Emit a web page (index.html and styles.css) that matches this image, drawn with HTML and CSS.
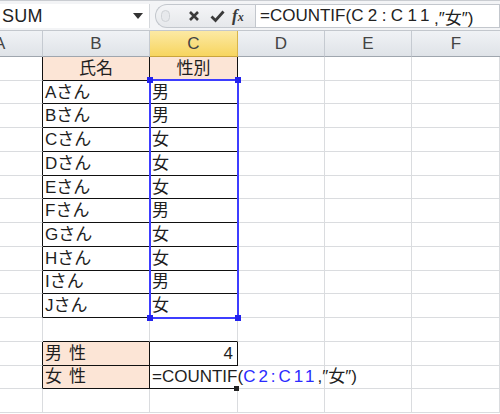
FILE: index.html
```html
<!DOCTYPE html>
<html lang="ja">
<head>
<meta charset="utf-8">
<link rel="stylesheet" href="styles.css">
</head>
<body>
<div class="bar">
  <div class="namebox"><span class="nm">SUM</span><span class="caret"></span></div>
  <div class="pill">
    <span class="dot"></span>
    <svg class="ic-x" width="12" height="12" viewBox="0 0 12 12"><path d="M2 2 L10 10 M10 2 L2 10" stroke="#3a3a3a" stroke-width="2.6" fill="none"/></svg>
    <svg class="ic-v" width="15" height="13" viewBox="0 0 15 13"><path d="M1.5 6.5 L5.5 10.5 L13.5 1.5" stroke="#3a3a3a" stroke-width="2.8" fill="none"/></svg>
    <span class="fx">f<span class="sx">x</span></span>
  </div>
  <div class="formula">=COUNTIF(<span class="wide">C2:C11</span>,″女″)</div>
</div>
<div class="sheet">
  <div class="grid">
  <div class="hd hd-a"><span>A</span></div><div class="hd">B</div><div class="hd hd-on">C</div><div class="hd">D</div><div class="hd">E</div><div class="hd hd-last">F</div>

  <div class="c lb"></div><div class="c bx pk ctr">氏名</div><div class="c bx pk ctr">性別</div><div class="c"></div><div class="c"></div><div class="c"></div>
  <div class="c lb"></div><div class="c bx">Aさん</div><div class="c bx">男</div><div class="c"></div><div class="c"></div><div class="c"></div>
  <div class="c lb"></div><div class="c bx">Bさん</div><div class="c bx">男</div><div class="c"></div><div class="c"></div><div class="c"></div>
  <div class="c lb"></div><div class="c bx">Cさん</div><div class="c bx">女</div><div class="c"></div><div class="c"></div><div class="c"></div>
  <div class="c lb"></div><div class="c bx">Dさん</div><div class="c bx">女</div><div class="c"></div><div class="c"></div><div class="c"></div>
  <div class="c lb"></div><div class="c bx">Eさん</div><div class="c bx">女</div><div class="c"></div><div class="c"></div><div class="c"></div>
  <div class="c lb"></div><div class="c bx">Fさん</div><div class="c bx">男</div><div class="c"></div><div class="c"></div><div class="c"></div>
  <div class="c lb"></div><div class="c bx">Gさん</div><div class="c bx">女</div><div class="c"></div><div class="c"></div><div class="c"></div>
  <div class="c lb"></div><div class="c bx">Hさん</div><div class="c bx">女</div><div class="c"></div><div class="c"></div><div class="c"></div>
  <div class="c lb"></div><div class="c bx">Iさん</div><div class="c bx">男</div><div class="c"></div><div class="c"></div><div class="c"></div>
  <div class="c lb"></div><div class="c bx">Jさん</div><div class="c bx">女</div><div class="c"></div><div class="c"></div><div class="c"></div>
  <div class="c"></div><div class="c bb"></div><div class="c bb"></div><div class="c"></div><div class="c"></div><div class="c"></div>
  <div class="c lb"></div><div class="c bx pk sp">男性</div><div class="c bx rt">4</div><div class="c"></div><div class="c"></div><div class="c"></div>
  <div class="c lb"></div><div class="c bx pk sp">女性</div><div class="c bx edit">=COUNTIF(<span class="ref">C2:C11</span>,″女″)<span class="handle"></span></div><div class="c"></div><div class="c"></div><div class="c"></div>
  <div class="c"></div><div class="c"></div><div class="c"></div><div class="c"></div><div class="c"></div><div class="c"></div>
  </div>
  <div class="overlay">
    <div class="sel"><i class="k k1"></i><i class="k k2"></i><i class="k k3"></i><i class="k k4"></i></div>
  </div>
</div>
</body>
</html>
```
FILE: styles.css
```css
* { box-sizing: border-box; }
html, body { margin: 0; padding: 0; background: #fff; }
body {
  width: 500px;
  height: 414px;
  overflow: hidden;
  font-family: "Liberation Sans", "Noto Sans CJK JP", sans-serif;
  color: #1e1e1e;
}
.bar {
  height: 31px;
  display: flex;
  align-items: stretch;
  padding-top: 3px;
  padding-bottom: 2px;
  background: #f3f4f6;
  border-top: 1px solid #c9ccd1;
  border-bottom: 1px solid #c3c7cd;
}
.namebox {
  width: 150px;
  background: #fff;
  display: flex;
  align-items: center;
  justify-content: space-between;
  padding: 0 4px 0 2px;
  border-right: 1px solid #d5d8dc;
}
.nm { font-size: 18px; color: #222; letter-spacing: 0.2px; }
.caret {
  width: 0; height: 0;
  border-left: 5px solid transparent;
  border-right: 5px solid transparent;
  border-top: 6px solid #333;
  margin-right: 2px;
}
.pill {
  width: 100px;
  margin-left: 5px;
  display: flex;
  align-items: center;
  background: linear-gradient(#f4f5f7, #e6e8eb);
  border: 1px solid #c3c7cd;
  border-right: none;
  border-radius: 13px 0 0 13px;
  padding-left: 5px;
}
.dot {
  width: 9px; height: 12px;
  border-radius: 5px;
  background: #e7e9ec;
  border: 1px solid #cfd2d6;
  margin-right: 18px;
}
.ic-x { margin-right: 10px; }
.ic-v { margin-right: 7px; }
.fx {
  font-family: "Liberation Serif", serif;
  font-style: italic;
  font-weight: bold;
  font-size: 17px;
  color: #3a3a3a;
}
.sx { font-size: 12px; }
.formula {
  flex: 1;
  background: #fff;
  border: 1px solid #c3c7cd;
  display: flex;
  align-items: center;
  padding-left: 4px;
  font-size: 17px;
  color: #222;
  white-space: nowrap;
}
.wide { letter-spacing: 4.4px; }

.sheet {
  position: relative;
  height: 382px;
  font-size: 17px;
  line-height: 18px;
}
.grid, .overlay {
  display: grid;
  grid-template-columns: 43px 107px 88px 87px 87px 88px;
  grid-template-rows: 26px repeat(15, minmax(0, 1fr));
  height: 382px;
}
.overlay {
  position: absolute;
  inset: 0;
  pointer-events: none;
}
.hd {
  background: linear-gradient(#f0f2f5, #dfe3e8);
  border-right: 1px solid #c5cad1;
  border-bottom: 1px solid #9fa6ae;
  display: flex;
  align-items: center;
  justify-content: center;
  font-size: 17px;
  color: #444;
  overflow: hidden;
}
.hd-a { justify-content: flex-start; }
.hd-a span { margin-left: -6px; }
.hd-on {
  background: linear-gradient(#fce9a4, #f7d55f);
  border-right-color: #d7b44a;
  border-bottom-color: #c9a43c;
}
.hd-last { border-right: none; }

.c {
  border-right: 1px solid #dadcdf;
  border-bottom: 1px solid #dadcdf;
  display: flex;
  align-items: center;
  padding: 1px 2px 0 2px;
  white-space: nowrap;
}
.c.lb { border-right-color: #111; }
.c.bb { border-bottom-color: #111; }
.c.bx { border-right-color: #111; border-bottom-color: #111; }
.pk { background: #fce5d6; }
.ctr { justify-content: center; }
.rt { justify-content: flex-end; padding-right: 4px; }
.sp { letter-spacing: 7px; }
.edit {
  position: relative;
  border-right: none;
  overflow: visible;
  z-index: 2;
}
.ref { color: #2b2bff; letter-spacing: 3px; }
.handle {
  position: absolute;
  right: -1px;
  bottom: -3px;
  width: 5px;
  height: 5px;
  background: #222;
}

.sel {
  grid-column: 3;
  grid-row: 3 / 13;
  margin: -2px -1px -1px -1px;
  border: 2px solid #3d3dff;
  position: relative;
}
.k {
  position: absolute;
  width: 6px;
  height: 6px;
  background: #2222ee;
}
.k1 { left: -4px; top: -4px; }
.k2 { right: -4px; top: -4px; }
.k3 { left: -4px; bottom: -4px; }
.k4 { right: -4px; bottom: -4px; }
```
